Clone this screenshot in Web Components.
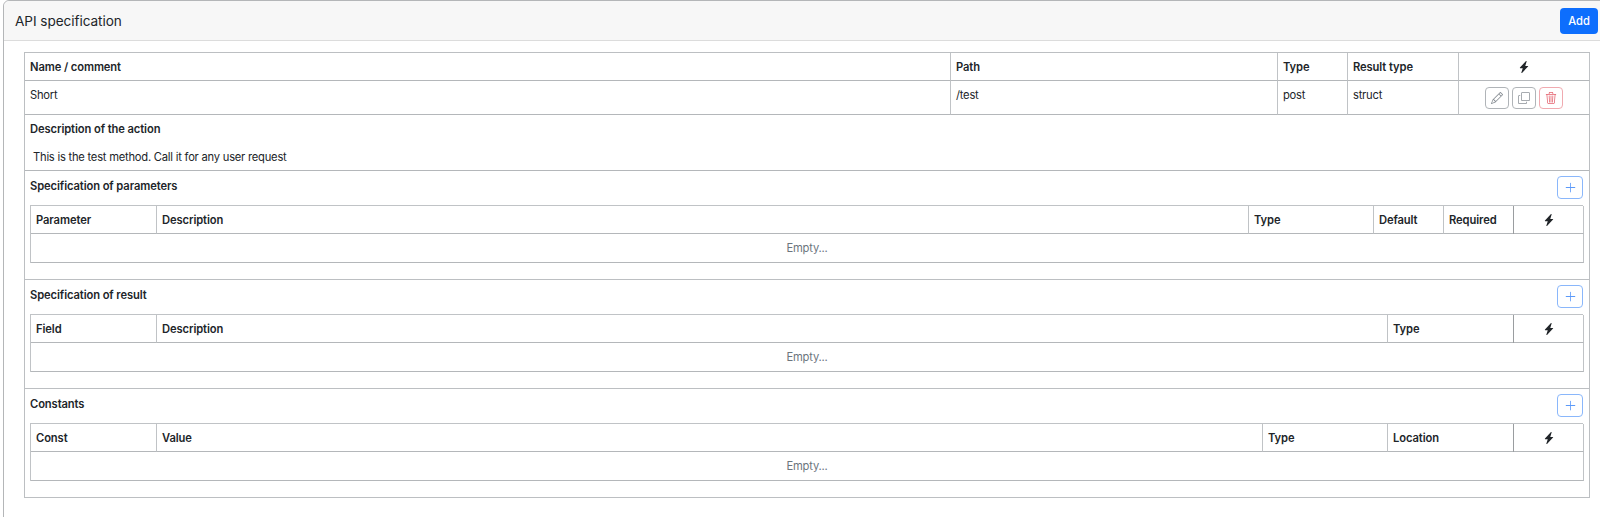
<!DOCTYPE html>
<html lang="en">
<head>
<meta charset="utf-8">
<title>API specification</title>
<style>
    html, body {
        margin: 0;
        height: 100%;
        overflow: hidden;
        background: #fff;
    }
    body {
        padding-left: 3px;
        font-family: Inter, "Liberation Sans", sans-serif;
        font-size: 11.2px;
        letter-spacing: -0.23px;
        color: #212529;
    }
</style>
</head>
<body>
<api-card heading="API specification">
    <text-button slot="action">Add</text-button>

    <api-panel>
        <api-grid cols="926px 327px 70px 111px 131px">
            <api-cell head>Name / comment</api-cell>
            <api-cell head>Path</api-cell>
            <api-cell head>Type</api-cell>
            <api-cell head>Result type</api-cell>
            <api-cell head center><api-icon name="bolt"></api-icon></api-cell>

            <api-cell tall>Short</api-cell>
            <api-cell tall>/test</api-cell>
            <api-cell tall>post</api-cell>
            <api-cell tall>struct</api-cell>
            <api-cell tall center>
                <icon-button name="pencil"></icon-button>
                <icon-button name="copy"></icon-button>
                <icon-button name="trash" kind="danger"></icon-button>
            </api-cell>
        </api-grid>

        <api-description heading="Description of the action">This is the test method. Call it for any user request</api-description>

        <api-section heading="Specification of parameters">
            <api-grid nested cols="126px 1092px 125px 70px 70px 70px">
                <api-cell head>Parameter</api-cell>
                <api-cell head>Description</api-cell>
                <api-cell head>Type</api-cell>
                <api-cell head>Default</api-cell>
                <api-cell head>Required</api-cell>
                <api-cell head center strong-line><api-icon name="bolt"></api-icon></api-cell>
                <api-cell empty>Empty...</api-cell>
            </api-grid>
        </api-section>

        <api-section heading="Specification of result">
            <api-grid nested cols="126px 1231px 126px 70px">
                <api-cell head>Field</api-cell>
                <api-cell head>Description</api-cell>
                <api-cell head>Type</api-cell>
                <api-cell head center strong-line><api-icon name="bolt"></api-icon></api-cell>
                <api-cell empty>Empty...</api-cell>
            </api-grid>
        </api-section>

        <api-section heading="Constants">
            <api-grid nested cols="126px 1106px 125px 126px 70px">
                <api-cell head>Const</api-cell>
                <api-cell head>Value</api-cell>
                <api-cell head>Type</api-cell>
                <api-cell head>Location</api-cell>
                <api-cell head center strong-line><api-icon name="bolt"></api-icon></api-cell>
                <api-cell empty>Empty...</api-cell>
            </api-grid>
        </api-section>
    </api-panel>
</api-card>

<script>
const ICONS = {
    bolt: 'M11.251.068a.5.5 0 0 1 .227.58L9.677 6.5H13a.5.5 0 0 1 .364.843l-8 8.5a.5.5 0 0 1-.842-.49L6.323 9.5H3a.5.5 0 0 1-.364-.843l8-8.5a.5.5 0 0 1 .615-.09z',
    pencil: 'M12.146.146a.5.5 0 0 1 .708 0l3 3a.5.5 0 0 1 0 .708l-10 10a.5.5 0 0 1-.168.11l-5 2a.5.5 0 0 1-.65-.65l2-5a.5.5 0 0 1 .11-.168l10-10zM11.207 2.5 13.5 4.793 14.793 3.5 12.5 1.207 11.207 2.5zm1.586 3L10.5 3.207 4 9.707V10h.5a.5.5 0 0 1 .5.5v.5h.5a.5.5 0 0 1 .5.5v.5h.293l6.5-6.5zm-9.761 5.175-.106.106-1.528 3.821 3.821-1.528.106-.106A.5.5 0 0 1 5 12.5V12h-.5a.5.5 0 0 1-.5-.5V11h-.5a.5.5 0 0 1-.468-.325z',
    copy: 'M4 2a2 2 0 0 1 2-2h8a2 2 0 0 1 2 2v8a2 2 0 0 1-2 2H6a2 2 0 0 1-2-2V2zm2-1a1 1 0 0 0-1 1v8a1 1 0 0 0 1 1h8a1 1 0 0 0 1-1V2a1 1 0 0 0-1-1H6zM2 5a1 1 0 0 0-1 1v8a1 1 0 0 0 1 1h8a1 1 0 0 0 1-1v-1h1v1a2 2 0 0 1-2 2H2a2 2 0 0 1-2-2V6a2 2 0 0 1 2-2h1v1H2z',
    trash: 'M6.5 1h3a.5.5 0 0 1 .5.5v1H6v-1a.5.5 0 0 1 .5-.5ZM11 2.5v-1A1.5 1.5 0 0 0 9.5 0h-3A1.5 1.5 0 0 0 5 1.5v1H2.506a.58.58 0 0 0-.01 0H1.5a.5.5 0 0 0 0 1h.538l.853 10.66A2 2 0 0 0 4.885 16h6.23a2 2 0 0 0 1.994-1.84l.853-10.66h.538a.5.5 0 0 0 0-1h-.995a.59.59 0 0 0-.01 0H11Zm1.958 1-.846 10.58a1 1 0 0 1-.997.92h-6.23a1 1 0 0 1-.997-.92L3.042 3.5h9.916Zm-7.487 1a.5.5 0 0 1 .528.47l.5 8.5a.5.5 0 0 1-.998.06L5 5.03a.5.5 0 0 1 .47-.53Zm5.058 0a.5.5 0 0 1 .47.53l-.5 8.5a.5.5 0 1 1-.998-.06l.5-8.5a.5.5 0 0 1 .528-.47ZM8 4.5a.5.5 0 0 1 .5.5v8.5a.5.5 0 0 1-1 0V5a.5.5 0 0 1 .5-.5Z',
    plus: 'M8 2a.5.5 0 0 1 .5.5v5h5a.5.5 0 0 1 0 1h-5v5a.5.5 0 0 1-1 0v-5h-5a.5.5 0 0 1 0-1h5v-5A.5.5 0 0 1 8 2Z'
};

class ApiIcon extends HTMLElement {
    constructor() {
        super();
        const shadow = this.attachShadow({ mode: 'open' });
        const size = this.getAttribute('size') || 12;
        shadow.innerHTML = `
        <style>
            :host { display: inline-flex; }
            svg { display: block; fill: currentColor; }
        </style>
        <svg width="${size}" height="${size}" viewBox="0 0 16 16"><path fill-rule="evenodd" d="${ICONS[this.getAttribute('name')]}"/></svg>
        `;
    }
}

class TextButton extends HTMLElement {
    constructor() {
        super();
        const shadow = this.attachShadow({ mode: 'open' });
        shadow.innerHTML = `
        <style>
            :host {
                display: flex;
                align-items: center;
                justify-content: center;
                box-sizing: border-box;
                width: 38px;
                height: 26px;
                border-radius: 4px;
                background: #0d6efd;
                color: #fff;
                font-size: 11.2px;
                font-weight: 500;
                letter-spacing: 0;
            }
        </style>
        <slot></slot>
        `;
    }
}

class IconButton extends HTMLElement {
    constructor() {
        super();
        const shadow = this.attachShadow({ mode: 'open' });
        const kind = this.getAttribute('kind') || 'plain';
        shadow.innerHTML = `
        <style>
            :host {
                display: inline-flex;
                align-items: center;
                justify-content: center;
                box-sizing: border-box;
                width: 24px;
                height: 22px;
                border: 1px solid #b0b4b8;
                border-radius: 4px;
                color: #8a9096;
            }
            :host([kind="danger"]) { border-color: #f0aab0; color: #e4606d; }
            :host([kind="add"]) { width: 26px; height: 23px; border-color: #8ab7fb; color: #5c9af9; }
        </style>
        <api-icon name="${this.getAttribute('name')}" size="${kind === 'add' ? 13 : 12}"></api-icon>
        `;
    }
}

class ApiCard extends HTMLElement {
    constructor() {
        super();
        const shadow = this.attachShadow({ mode: 'open' });
        shadow.innerHTML = `
        <style>
            :host {
                display: block;
                box-sizing: border-box;
                width: 1607px;
                height: 540px;
                border: 1px solid #b4b6b8;
                border-radius: 6px 6px 0 0;
            }
            header {
                display: flex;
                align-items: center;
                justify-content: space-between;
                box-sizing: border-box;
                height: 40px;
                padding: 0 11px 0 11px;
                background: #f7f7f7;
                border-bottom: 1px solid #dcdcdc;
                border-radius: 6px 6px 0 0;
                font-size: 13.6px;
                letter-spacing: -0.06px;
            }
            main { padding: 11px 16px 0 20px; }
        </style>
        <header><span>${this.getAttribute('heading')}</span><slot name="action"></slot></header>
        <main><slot></slot></main>
        `;
    }
}

class ApiPanel extends HTMLElement {
    constructor() {
        super();
        const shadow = this.attachShadow({ mode: 'open' });
        shadow.innerHTML = `
        <style>
            :host {
                display: block;
                box-sizing: border-box;
                width: 1566px;
                border: 1px solid #bcbfc2;
                border-width: 1px 1px 0 1px;
            }
        </style>
        <slot></slot>
        `;
    }
}

class ApiGrid extends HTMLElement {
    constructor() {
        super();
        const shadow = this.attachShadow({ mode: 'open' });
        shadow.innerHTML = `
        <style>
            :host {
                display: grid;
                grid-template-columns: ${this.getAttribute('cols')};
            }
            :host([nested]) {
                box-sizing: border-box;
                border: 1px solid #c0c3c6;
                border-width: 1px 0 0 1px;
            }
        </style>
        <slot></slot>
        `;
    }
}

class ApiCell extends HTMLElement {
    constructor() {
        super();
        const shadow = this.attachShadow({ mode: 'open' });
        shadow.innerHTML = `
        <style>
            :host {
                display: flex;
                align-items: center;
                box-sizing: border-box;
                min-width: 0;
                height: 28px;
                padding: 0 5px;
                gap: 3px;
                border-right: 1px solid #c0c3c6;
                border-bottom: 1px solid #b4b7ba;
            }
            :host([head]) { font-weight: 600; letter-spacing: -0.1px; }
            :host([tall]) { height: 34px; align-items: flex-start; padding-top: 7px; }
            :host([tall][center]) { align-items: center; padding-top: 0; }
            :host([center]) { justify-content: center; padding: 0; }
            /* the divider before the action column is darker in nested tables */
            :host([strong-line]) { box-shadow: -1px 0 0 #9a9da0; }
            :host([empty]) {
                grid-column: 1 / -1;
                justify-content: center;
                height: 29px;
                color: #6c757d;
            }
        </style>
        <slot></slot>
        `;
    }
}

class ApiDescription extends HTMLElement {
    constructor() {
        super();
        const shadow = this.attachShadow({ mode: 'open' });
        shadow.innerHTML = `
        <style>
            :host {
                display: block;
                box-sizing: border-box;
                height: 56px;
                padding: 5px 5px 0;
                border-bottom: 1px solid #b4b7ba;
            }
            h4 { margin: 0; font: 600 11.2px/18px Inter, "Liberation Sans", sans-serif; letter-spacing: -0.1px; }
            p { margin: 10px 0 0 3px; line-height: 18px; }
        </style>
        <h4>${this.getAttribute('heading')}</h4>
        <p><slot></slot></p>
        `;
    }
}

class ApiSection extends HTMLElement {
    constructor() {
        super();
        const shadow = this.attachShadow({ mode: 'open' });
        shadow.innerHTML = `
        <style>
            :host {
                display: block;
                box-sizing: border-box;
                height: 109px;
                padding: 5px 6px 0 5px;
                border-bottom: 1px solid #bcbfc2;
            }
            .top {
                display: flex;
                justify-content: space-between;
                align-items: flex-start;
                margin-bottom: 6px;
            }
            h4 { margin: 1px 0 0; font: 600 11.2px/18px Inter, "Liberation Sans", sans-serif; letter-spacing: -0.1px; }
        </style>
        <div class="top">
            <h4>${this.getAttribute('heading')}</h4>
            <icon-button name="plus" kind="add"></icon-button>
        </div>
        <slot></slot>
        `;
    }
}

customElements.define('api-icon', ApiIcon);
customElements.define('text-button', TextButton);
customElements.define('icon-button', IconButton);
customElements.define('api-card', ApiCard);
customElements.define('api-panel', ApiPanel);
customElements.define('api-grid', ApiGrid);
customElements.define('api-cell', ApiCell);
customElements.define('api-description', ApiDescription);
customElements.define('api-section', ApiSection);
</script>
</body>
</html>
